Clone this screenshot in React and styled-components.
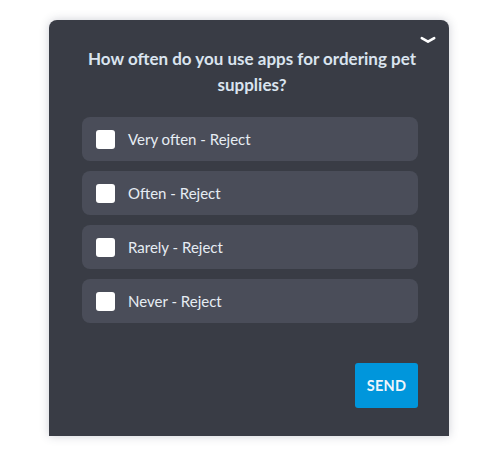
import React from "react";
import styled, { createGlobalStyle } from "styled-components";

const GlobalStyle = createGlobalStyle`
  html, body {
    margin: 0;
    padding: 0;
    background: #ffffff;
    font-family: "Source Sans Pro", Lato, "Noto Sans", sans-serif;
  }
`;

const Page = styled.div`
  width: 486px;
  height: 450px;
  display: flex;
  justify-content: center;
  padding-top: 20px;
  box-sizing: border-box;
  overflow: hidden;
`;

const Panel = styled.div`
  width: 400px;
  height: 416px;
  margin-left: 12px;
  background-color: #393c45;
  border-radius: 8px 8px 0 0;
  box-shadow: 0 0 10px rgba(60, 64, 90, 0.25);
  display: flex;
  flex-direction: column;
  position: relative;
  box-sizing: border-box;
  padding: 26px 31px 0 33px;
`;

const Collapse = styled.button`
  position: absolute;
  top: 16px;
  right: 13px;
  background: none;
  border: none;
  padding: 0;
  cursor: pointer;
  display: flex;
`;

const Title = styled.h2`
  margin: 0 0 19px 4px;
  font-size: 17px;
  font-weight: 700;
  line-height: 26px;
  color: #dae4ef;
  text-align: center;
`;

const Options = styled.div`
  display: flex;
  flex-direction: column;
  gap: 10px;
`;

const Option = styled.label`
  height: 44px;
  background-color: #4a4d59;
  border-radius: 8px;
  display: flex;
  align-items: center;
  gap: 13px;
  padding-left: 14px;
  cursor: pointer;
  font-size: 15px;
  color: #e6ecf3;
`;

const Box = styled.span`
  width: 19px;
  height: 19px;
  background: #ffffff;
  border-radius: 3px;
  flex-shrink: 0;
`;

const Footer = styled.div`
  display: flex;
  justify-content: flex-end;
  margin-top: 40px;
`;

const SendButton = styled.button`
  width: 63px;
  height: 45px;
  background-color: #0096dc;
  border: none;
  border-radius: 3px;
  color: #eef5fb;
  font-family: inherit;
  font-weight: 700;
  font-size: 14.5px;
  letter-spacing: 0.3px;
  cursor: pointer;
`;

const App = () => {
  const options = [
    "Very often - Reject",
    "Often - Reject",
    "Rarely - Reject",
    "Never - Reject",
  ];

  return (
    <>
      <GlobalStyle />
      <Page>
        <Panel>
          <Collapse aria-label="collapse">
            <svg width="16" height="8" viewBox="0 0 16 8">
              <path
                d="M1.8 2.2 L8 5.6 L14.2 2.2"
                fill="none"
                stroke="#ffffff"
                strokeWidth="2.6"
                strokeLinecap="round"
                strokeLinejoin="round"
              />
            </svg>
          </Collapse>
          <Title>How often do you use apps for ordering pet supplies?</Title>
          <Options>
            {options.map((text, idx) => (
              <Option key={`option-${idx}`}>
                <Box />
                <span>{text}</span>
              </Option>
            ))}
          </Options>
          <Footer>
            <SendButton>SEND</SendButton>
          </Footer>
        </Panel>
      </Page>
    </>
  );
};

export default App;
